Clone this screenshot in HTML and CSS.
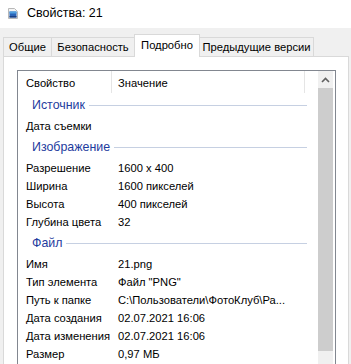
FILE: index.html
```html
<!DOCTYPE html>
<html lang="ru">
<head>
  <meta charset="UTF-8" />
  <title>Свойства: 21</title>
  <link rel="stylesheet" href="styles.css">
</head>
<body>

  <div class="titlebar">
    <svg class="file-icon" width="10" height="11" viewBox="0 0 10 11">
      <path d="M0.5 0.5h6l3 3v7h-9z" fill="#f4f4f4" stroke="#b8b8b8"/>
      <rect x="1.5" y="3.5" width="7" height="6" fill="#2a64b8"/>
      <rect x="1.5" y="3.5" width="7" height="2" fill="#4fa0e0"/>
      <rect x="1.5" y="8" width="7" height="1.5" fill="#1c3f80"/>
    </svg>
    <span class="title">Свойства: 21</span>
  </div>

  <div class="window">
    <div class="tabs">
      <div class="tab tab-general">Общие</div>
      <div class="tab tab-security">Безопасность</div>
      <div class="tab tab-details active">Подробно</div>
      <div class="tab tab-versions">Предыдущие версии</div>
    </div>

    <div class="panel">
      <div class="listview">
        <div class="list-content">
          <div class="list-header">
            <div class="col-name">Свойство</div>
            <div class="col-value">Значение</div>
          </div>

          <div class="group"><span>Источник</span><i></i></div>
          <div class="row"><div class="col-name">Дата съемки</div><div class="col-value"></div></div>

          <div class="group"><span>Изображение</span><i></i></div>
          <div class="row"><div class="col-name">Разрешение</div><div class="col-value">1600 x 400</div></div>
          <div class="row"><div class="col-name">Ширина</div><div class="col-value">1600 пикселей</div></div>
          <div class="row"><div class="col-name">Высота</div><div class="col-value">400 пикселей</div></div>
          <div class="row"><div class="col-name">Глубина цвета</div><div class="col-value">32</div></div>

          <div class="group"><span>Файл</span><i></i></div>
          <div class="row"><div class="col-name">Имя</div><div class="col-value">21.png</div></div>
          <div class="row"><div class="col-name">Тип элемента</div><div class="col-value">Файл "PNG"</div></div>
          <div class="row"><div class="col-name">Путь к папке</div><div class="col-value">C:\Пользователи\ФотоКлуб\Ра...</div></div>
          <div class="row"><div class="col-name">Дата создания</div><div class="col-value">02.07.2021 16:06</div></div>
          <div class="row"><div class="col-name">Дата изменения</div><div class="col-value">02.07.2021 16:06</div></div>
          <div class="row"><div class="col-name">Размер</div><div class="col-value">0,97 МБ</div></div>
        </div>

        <div class="scrollbar">
          <div class="scroll-up">
            <svg width="9" height="6" viewBox="0 0 9 6">
              <path d="M1 5L4.5 1.5L8 5" fill="none" stroke="#606060" stroke-width="1.6"/>
            </svg>
          </div>
          <div class="scroll-thumb"></div>
        </div>
      </div>
    </div>
  </div>

</body>
</html>
```

FILE: styles.css
```css
body {
  margin: 0;
  width: 351px;
  height: 364px;
  overflow: hidden;
  font-family: 'Liberation Sans', Arial, sans-serif;
  font-size: 11.2px;
  color: #000;
  background: #f0f0f0;
}

/* Title bar */
.titlebar {
  height: 28px;
  background: #fff;
  display: flex;
  align-items: center;
  padding-left: 8px;
  box-sizing: border-box;
}

.file-icon {
  margin-top: -2px;
}

.title {
  margin-left: 9px;
  margin-top: -2px;
  font-size: 12.5px;
}

/* Tabs */
.window {
  padding: 6px 2px 0 3px;
}

.tabs {
  display: flex;
  align-items: flex-end;
  height: 22px;
  position: relative;
  z-index: 1;
}

.tab {
  height: 18px;
  line-height: 18px;
  text-align: center;
  box-sizing: content-box;
  border: 1px solid #d9d9d9;
  border-bottom: none;
  margin-left: -1px;
  background: #f0f0f0;
  white-space: nowrap;
}

.tab-general {
  margin-left: 0;
  width: 47px;
}

.tab-security {
  width: 82px;
}

.tab-details {
  width: 64px;
}

.tab-versions {
  width: 113px;
}

.tab.active {
  height: 22px;
  line-height: 20px;
  background: #fff;
  margin-bottom: -1px;
}

.panel {
  background: #fff;
  border: 1px solid #d9d9d9;
  height: 320px;
  padding: 13px 12px 0 13px;
}

/* List view */
.listview {
  border: 1px solid #828790;
  display: flex;
  height: 320px;
}

.list-content {
  width: 300px;
}

.list-header {
  display: flex;
  height: 22px;
  align-items: center;
  padding-top: 1px;
  box-sizing: border-box;
}

.list-header .col-name {
  border-right: 1px solid #e5e5e5;
  height: 22px;
  line-height: 24px;
  margin-top: -1px;
}

.list-header .col-value {
  width: 186px;
  border-right: 1px solid #e5e5e5;
  height: 22px;
  line-height: 24px;
  margin-top: -1px;
}

.col-name {
  width: 94px;
  padding-left: 8px;
  box-sizing: border-box;
  white-space: nowrap;
}

.col-value {
  padding-left: 6px;
  white-space: nowrap;
}

.row {
  display: flex;
  height: 18px;
  line-height: 18px;
}

.group {
  display: flex;
  align-items: center;
  height: 24px;
  padding-left: 14px;
  padding-right: 11px;
  color: #1e3c9e;
  font-size: 12.4px;
}

.group i {
  flex: 1;
  height: 1px;
  margin-left: 4px;
  background: #c6d0e2;
}

/* Scrollbar */
.scrollbar {
  width: 15px;
  margin-right: 2px;
  background: #f0f0f0;
  display: flex;
  flex-direction: column;
}

.scroll-up {
  height: 17px;
  display: flex;
  align-items: center;
  justify-content: center;
}

.scroll-thumb {
  height: 263px;
  background: #cdcdcd;
}
```
